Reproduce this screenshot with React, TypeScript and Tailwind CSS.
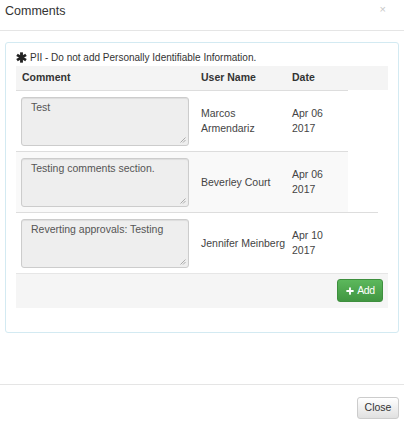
import { Plus } from "lucide-react";

type CommentRow = {
  text: string;
  user: string[];
  date: string[];
  width: string;
  striped?: boolean;
};

const rows: CommentRow[] = [
  { text: "Test", user: ["Marcos", "Armendariz"], date: ["Apr 06", "2017"], width: "w-[332px]" },
  { text: "Testing comments section.", user: ["Beverley Court"], date: ["Apr 06", "2017"], width: "w-[332px]", striped: true },
  { text: "Reverting approvals: Testing", user: ["Jennifer Meinberg"], date: ["Apr 10", "2017"], width: "w-[362px]" },
];

function Asterisk() {
  return (
    <svg width="11" height="11" viewBox="0 0 10 10" className="mr-[3px] shrink-0">
      <g stroke="#222" strokeWidth="2.6" strokeLinecap="butt">
        <line x1="5" y1="0.3" x2="5" y2="9.7" />
        <line x1="0.9" y1="2.6" x2="9.1" y2="7.4" />
        <line x1="0.9" y1="7.4" x2="9.1" y2="2.6" />
      </g>
    </svg>
  );
}

function CommentBox({ text }: { text: string }) {
  return (
    <div className="relative h-[49px] w-[168px] rounded-[3px] border border-[#cccccc] bg-[#eeeeee] px-[9px] pt-[2px] text-[10.5px] leading-[14px] text-[#555] shadow-[inset_0_1px_1px_rgba(0,0,0,0.075)]">
      {text}
      <svg width="6" height="6" viewBox="0 0 6 6" className="absolute bottom-[2px] right-[2px]">
        <g stroke="#999" strokeWidth="0.8">
          <line x1="0.5" y1="5.5" x2="5.5" y2="0.5" />
          <line x1="3" y1="5.5" x2="5.5" y2="3" />
        </g>
      </svg>
    </div>
  );
}

export default function App() {
  return (
    <div
      className="flex h-[423px] w-[404px] flex-col bg-white text-[#333]"
      style={{ fontFamily: '"Liberation Sans", Arial, sans-serif' }}
    >
      <div className="flex h-[31px] shrink-0 items-start justify-between border-b border-[#e5e5e5] pl-[5px] pr-[18px] pt-[3px]">
        <span className="text-[12.5px] leading-[16px]">Comments</span>
        <span className="text-[11px] leading-[12px] text-[#c8c8c8]">×</span>
      </div>

      <div className="flex-1 px-[5px] pt-[11px]">
        <div className="rounded-[3px] border border-[#d3eaf2] px-[10px] pb-[24px] pt-[7px]">
          <div className="mb-[2px] flex h-[14px] items-center text-[10px]">
            <Asterisk />
            <span>PII - Do not add Personally Identifiable Information.</span>
          </div>

          <div className="flex h-[24px] w-[372px] items-center bg-[#f4f4f4] text-[10.5px] font-bold">
            <div className="w-[179px] pl-[6px]">Comment</div>
            <div className="w-[91px] pl-[6px]">User Name</div>
            <div className="pl-[6px]">Date</div>
          </div>

          {rows.map((r) => (
            <div
              key={r.text}
              className={`flex h-[61px] items-center border-t border-[#dddddd] ${r.width} ${r.striped ? "bg-[#f9f9f9]" : ""}`}
            >
              <div className="w-[179px] pl-[5px]">
                <CommentBox text={r.text} />
              </div>
              <div className="w-[91px] pl-[6px] text-[10.5px] leading-[15px] text-[#444]">
                {r.user.map((u) => (
                  <div key={u}>{u}</div>
                ))}
              </div>
              <div className="pl-[6px] text-[10.5px] leading-[15px] text-[#444]">
                {r.date.map((d) => (
                  <div key={d}>{d}</div>
                ))}
              </div>
            </div>
          ))}

          <div className="flex h-[35px] w-[372px] justify-end border-t border-[#e6e6e6] bg-[#f5f5f5] pr-[5px] pt-[5px]">
            <button className="flex h-[23px] w-[46px] items-center justify-center gap-[2px] rounded-[3px] border border-[#3e8f3e] bg-gradient-to-b from-[#5cb85c] to-[#419641] text-[10.5px] tracking-[-0.4px] text-white">
              <Plus size={10} strokeWidth={4.5} />
              Add
            </button>
          </div>
        </div>
      </div>

      <div className="flex h-[39px] shrink-0 items-start justify-end border-t border-[#e5e5e5] pr-[5px] pt-[12px]">
        <button className="h-[22px] w-[42px] rounded-[3px] border border-[#cccccc] bg-gradient-to-b from-white to-[#e0e0e0] text-[10.5px] text-[#333]">
          Close
        </button>
      </div>
    </div>
  );
}
